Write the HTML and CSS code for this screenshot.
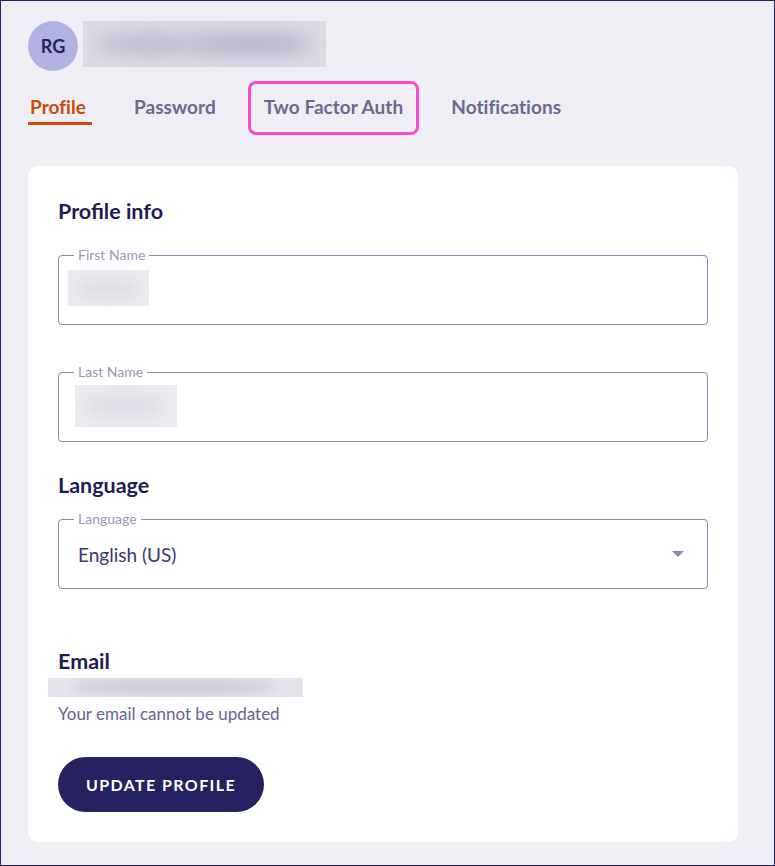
FILE: index.html
```html
<!DOCTYPE html>
<html lang="en">
<head>
<meta charset="utf-8">
<title>Profile</title>
<link rel="stylesheet" href="styles.css">
</head>
<body>
<div class="page">
  <header class="user">
    <div class="avatar">RG</div>
    <div class="blur name-blur"><span class="blob b1"></span><span class="blob b2"></span></div>
  </header>
  <nav class="tabs">
    <a class="tab active">Profile</a>
    <a class="tab">Password</a>
    <a class="tab highlight">Two Factor Auth</a>
    <a class="tab">Notifications</a>
  </nav>
  <main class="card">
    <h2 class="heading first">Profile info</h2>
    <div class="field">
      <span class="label">First Name</span>
      <div class="blur val-blur v1"><span class="blob b3"></span></div>
    </div>
    <div class="field second">
      <span class="label">Last Name</span>
      <div class="blur val-blur v2"><span class="blob b3"></span></div>
    </div>
    <h2 class="heading lang">Language</h2>
    <div class="field select">
      <span class="label">Language</span>
      <span class="value">English (US)</span>
      <svg class="arrow" width="12" height="6" viewBox="0 0 12 6"><path d="M0 0h12L6 6z" fill="#8c87ab"/></svg>
    </div>
    <h2 class="heading email">Email</h2>
    <div class="blur email-blur"><span class="blob b4"></span></div>
    <p class="hint">Your email cannot be updated</p>
    <button class="btn">UPDATE PROFILE</button>
  </main>
</div>
</body>
</html>
```
FILE: styles.css
```css
* { box-sizing: border-box; }
html, body { margin: 0; padding: 0; }
body {
  font-family: Lato, "Noto Sans", sans-serif;
  background: #efeef4;
}
.page {
  width: 775px;
  height: 866px;
  border: 1px solid #27215e;
  background: #efeef4;
  padding: 20px 0 0 27px;
}
.user {
  display: flex;
  align-items: center;
  gap: 5px;
  height: 50px;
}
.avatar {
  width: 50px;
  height: 50px;
  border-radius: 50%;
  background: #b2b2e2;
  color: #26225c;
  font-weight: 700;
  font-size: 18px;
  display: flex;
  align-items: center;
  justify-content: center;
}
.blur {
  position: relative;
  overflow: hidden;
  background: #e4e3ea;
}
.blob {
  position: absolute;
  border-radius: 50%;
  filter: blur(9px);
}
.name-blur {
  width: 243px;
  height: 46px;
  margin-top: -4px;
  background: #dddce5;
}
.b1 { left: 10px; top: 12px; width: 120px; height: 22px; background: #bdbbcc; }
.b2 { left: 110px; top: 10px; width: 120px; height: 26px; background: #b8b6c8; }
.tabs {
  display: flex;
  align-items: center;
  gap: 16px;
  margin: 10px 0 0 -14px;
}
.tab {
  position: relative;
  font-size: 19px;
  font-weight: 700;
  letter-spacing: 0.05px;
  color: #6b6895;
  padding: 11px 13px 13px;
  line-height: 24px;
  border: 3px solid transparent;
  border-radius: 8px;
}
.tab.active { color: #c94a0a; }
.tab.active::after {
  content: "";
  position: absolute;
  left: 11px;
  right: 7px;
  bottom: 7px;
  height: 3px;
  background: #c94a0a;
}
.tab.highlight { border-color: #f74ccd; }
.card {
  margin-top: 31px;
  width: 710px;
  height: 676px;
  background: #fff;
  border-radius: 10px;
  padding: 31px 30px 0;
}
.heading {
  margin: 0;
  font-size: 21.5px;
  line-height: 28px;
  font-weight: 700;
  color: #1f1c54;
}
.field {
  position: relative;
  height: 70px;
  border: 1px solid #8f8aad;
  border-radius: 4px;
  margin-top: 30px;
}
.field.second { margin-top: 47px; }
.label {
  position: absolute;
  top: -9px;
  left: 15px;
  padding: 0 4px;
  background: #fff;
  font-size: 14px;
  line-height: 16px;
  color: #9b97b6;
}
.val-blur { position: absolute; background: #ecebf0; }
.v1 { left: 9px; top: 14px; width: 81px; height: 36px; }
.v2 { left: 16px; top: 12px; width: 102px; height: 42px; }
.b3 { left: 8px; top: 10px; width: 80%; height: 50%; background: #dcdbe4; filter: blur(7px); }
.heading.lang { margin-top: 29px; }
.field.select {
  margin-top: 20px;
  display: flex;
  align-items: center;
  padding: 0 23px 0 19px;
}
.value {
  flex: 1;
  font-size: 19px;
  color: #3e3a6e;
}
.arrow { display: block; }
.heading.email { margin-top: 58px; }
.email-blur {
  margin: 3px 0 0 -10px;
  width: 255px;
  height: 19px;
  background: #e6e5ec;
}
.b4 { left: 20px; top: 2px; width: 210px; height: 14px; background: #c9c8d4; filter: blur(6px); }
.hint {
  margin: 6px 0 0;
  font-size: 17px;
  line-height: 22px;
  color: #67638f;
}
.btn {
  margin-top: 32px;
  width: 206px;
  height: 55px;
  border: 0;
  border-radius: 28px;
  background: #262160;
  color: #fff;
  font-family: inherit;
  font-size: 16px;
  font-weight: 700;
  letter-spacing: 1.4px;
}
```
